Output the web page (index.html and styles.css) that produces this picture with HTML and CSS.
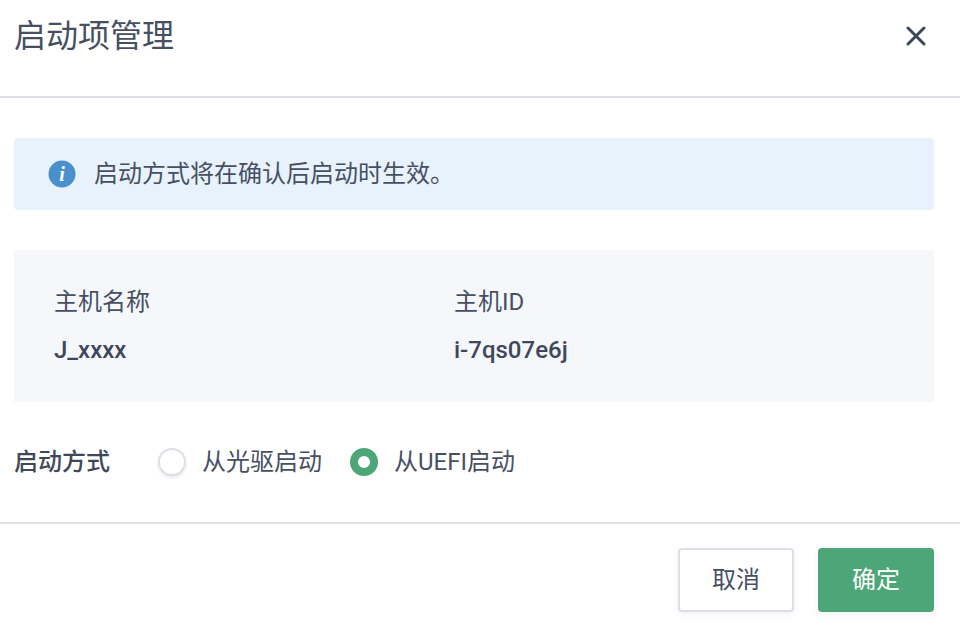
FILE: index.html
```html
<!DOCTYPE html>
<html lang="zh-CN">
<head>
<meta charset="utf-8">
<title>启动项管理</title>
<link rel="stylesheet" href="styles.css">
</head>
<body>
<div class="dialog">
  <header class="head">
    <h1 class="title">启动项管理</h1>
    <svg class="close" width="22" height="22" viewBox="0 0 22 22"><path d="M3 3 19 19M19 3 3 19" fill="none" stroke="#3d4559" stroke-width="3" stroke-linecap="round"/></svg>
  </header>
  <main class="body">
    <div class="alert">
      <svg class="info" width="28" height="28" viewBox="0 0 28 28"><circle cx="14" cy="14" r="13.5" fill="#4a90cc"/><text x="14" y="21" class="info-i" text-anchor="middle">i</text></svg>
      <span>启动方式将在确认后启动时生效。</span>
    </div>
    <div class="panel">
      <div class="col">
        <div class="label">主机名称</div>
        <div class="value">J_xxxx</div>
      </div>
      <div class="col">
        <div class="label">主机ID</div>
        <div class="value">i-7qs07e6j</div>
      </div>
    </div>
    <div class="field">
      <span class="field-name">启动方式</span>
      <label class="radio"><i class="dot"></i>从光驱启动</label>
      <label class="radio on"><i class="dot"></i>从UEFI启动</label>
    </div>
  </main>
  <footer class="foot">
    <button class="btn">取消</button>
    <button class="btn primary">确定</button>
  </footer>
</div>
</body>
</html>
```
FILE: styles.css
```css
* { box-sizing: border-box; }
html, body { margin: 0; padding: 0; background: #fff; }
body {
  width: 960px;
  height: 628px;
  overflow: hidden;
  font-family: Roboto, "Noto Sans CJK SC", sans-serif;
  color: #475063;
}
.dialog { display: flex; flex-direction: column; height: 628px; }
.head {
  height: 98px;
  padding: 0 33px 24px 14px;
  border-bottom: 2px solid #dcdfe8;
  display: flex;
  align-items: center;
  justify-content: space-between;
}
.title { margin: 0; font-size: 32px; font-weight: 400; line-height: 44px; color: #475063; }
.close { display: block; }
.body { padding: 40px 26px 0 14px; height: 424px; }
.alert {
  height: 72px;
  padding-left: 34px;
  background: #e7f2fc;
  border-radius: 4px;
  display: flex;
  align-items: center;
  gap: 18px;
  font-size: 24px;
  line-height: 36px;
}
.info { display: block; flex: none; }
.info-i { font-family: "Liberation Serif", serif; font-style: italic; font-weight: 700; font-size: 20px; fill: #fff; }
.panel {
  margin-top: 40px;
  height: 152px;
  padding: 34px 40px 0;
  background: #f5f7fa;
  display: flex;
}
.col { width: 400px; }
.label { font-size: 24px; line-height: 36px; }
.value { margin-top: 12px; font-size: 24px; line-height: 36px; font-weight: 500; color: #3f485b; }
.field { margin-top: 40px; height: 40px; display: flex; align-items: center; font-size: 24px; line-height: 36px; }
.field-name { width: 144px; font-weight: 500; color: #3f485b; }
.radio { display: flex; align-items: center; gap: 16px; margin-right: 28px; }
.dot {
  width: 28px;
  height: 28px;
  border-radius: 50%;
  border: 2px solid #dcdfe8;
  box-shadow: 0 2px 3px rgba(71, 79, 97, .12);
  background: #fff;
}
.on .dot { border: 8.5px solid #4da677; box-shadow: none; }
.foot {
  flex: 1;
  border-top: 2px solid #dcdfe8;
  padding: 24px 26px 0 0;
  display: flex;
  justify-content: flex-end;
  align-items: flex-start;
  gap: 24px;
}
.btn {
  width: 116px;
  height: 64px;
  border: 2px solid #dcdfe8;
  border-radius: 4px;
  background: #fff;
  font: inherit;
  font-size: 24px;
  line-height: 36px;
  color: #475063;
  box-shadow: 0 2px 6px rgba(71, 79, 97, .08);
}
.primary { border-color: #4da677; background: #4da677; color: #fff; }
```
